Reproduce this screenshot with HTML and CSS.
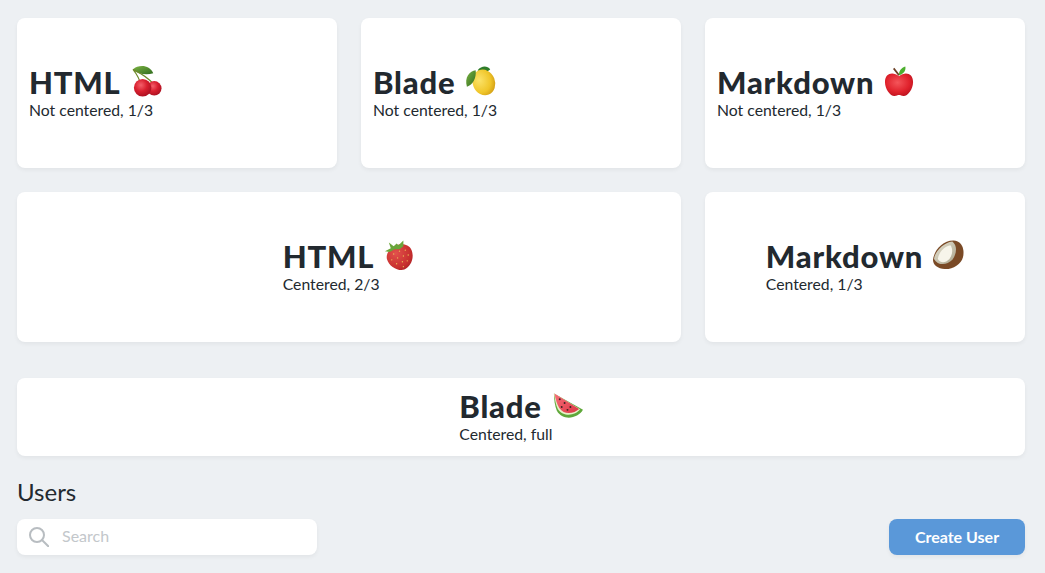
FILE: index.html
```html
<!DOCTYPE html>
<html lang="en">
<head>
<meta charset="utf-8">
<title>Cards</title>
<link rel="stylesheet" href="styles.css">
</head>
<body>
<svg class="defs" width="0" height="0" aria-hidden="true">
  <defs>
    <radialGradient id="gCherry" cx="40%" cy="35%" r="70%"><stop offset="0" stop-color="#f4606a"/><stop offset=".5" stop-color="#d9202f"/><stop offset="1" stop-color="#a80f20"/></radialGradient>
    <radialGradient id="gLemon" cx="35%" cy="35%" r="75%"><stop offset="0" stop-color="#fbe36a"/><stop offset=".65" stop-color="#f0c62a"/><stop offset="1" stop-color="#cf9a12"/></radialGradient>
    <radialGradient id="gApple" cx="45%" cy="40%" r="70%"><stop offset="0" stop-color="#f4555a"/><stop offset=".6" stop-color="#e0222c"/><stop offset="1" stop-color="#b3101d"/></radialGradient>
    <radialGradient id="gBerry" cx="35%" cy="35%" r="80%"><stop offset="0" stop-color="#e2504c"/><stop offset=".7" stop-color="#c8302f"/><stop offset="1" stop-color="#a51c24"/></radialGradient>
    <linearGradient id="gLeaf" x1="0" y1="0" x2="1" y2="1"><stop offset="0" stop-color="#7cb342"/><stop offset="1" stop-color="#2f6b1f"/></linearGradient>
    <linearGradient id="gFlesh" x1="0" y1="0" x2="1" y2="1"><stop offset="0" stop-color="#e8e4d4"/><stop offset="1" stop-color="#a9a48c"/></linearGradient>
    <linearGradient id="gMelon" x1="0" y1="0" x2="1" y2="1"><stop offset="0" stop-color="#f6707a"/><stop offset="1" stop-color="#dd3644"/></linearGradient>
  </defs>
</svg>
<main class="page">
  <section class="row">
    <article class="card">
      <div class="copy">
        <h2 class="title">HTML
          <svg class="emoji" viewBox="0 0 32 32" aria-hidden="true">
            <path d="M2 4C8 -1 19 -1 23 8 16 10 7 9 2 4Z" fill="url(#gLeaf)"/>
            <path d="M2 4C6 9 9 14 10 20M2 4C10 8 18 13 23 19" fill="none" stroke="#6f8a2c" stroke-width="1.2"/>
            <circle cx="24" cy="23.500" r="7.500" fill="url(#gCherry)"/>
            <circle cx="12" cy="23" r="9" fill="url(#gCherry)"/>
          </svg>
        </h2>
        <p class="sub">Not centered, 1/3</p>
      </div>
    </article>
    <article class="card">
      <div class="copy">
        <h2 class="title">Blade
          <svg class="emoji" viewBox="0 0 32 32" aria-hidden="true">
            <path d="M13 5C17 0 23 0 26 4 22 7 17 8 13 5Z" fill="#2f7d2a"/>
            <ellipse cx="19.500" cy="17.500" rx="11.500" ry="13.500" transform="rotate(-22 19.500 17.500)" fill="url(#gLemon)"/>
            <path d="M11 5C5 6 -1 12 2 22 8 20 12 13 11 5Z" fill="url(#gLeaf)"/>
          </svg>
        </h2>
        <p class="sub">Not centered, 1/3</p>
      </div>
    </article>
    <article class="card">
      <div class="copy">
        <h2 class="title">Markdown
          <svg class="emoji" viewBox="0 0 32 32" aria-hidden="true">
            <path d="M15.500 11C9 6 1 8 1 17 1 25 7 32 11 31.500 13 31.300 14 30.500 15.500 30.500 17 30.500 18 31.300 20 31.500 24 32 30 25 30 17 30 8 22 6 15.500 11Z" fill="url(#gApple)"/>
            <path d="M10 3L15.500 10" stroke="#6b3f24" stroke-width="1.800" fill="none"/>
            <path d="M15.500 10C15 6 18 2 22 1 23 5 20 9 15.500 10Z" fill="#4caf2f"/>
          </svg>
        </h2>
        <p class="sub">Not centered, 1/3</p>
      </div>
    </article>
  </section>
  <section class="row">
    <article class="card card-wide card-center">
      <div class="copy">
        <h2 class="title">HTML
          <svg class="emoji" viewBox="0 0 32 32" aria-hidden="true">
            <path d="M8 9C14 3 25 4 28 10 32 18 28 28 21 31 15 33 5 28 3 20 2 15 5 11 8 9Z" fill="url(#gBerry)"/>
            <g fill="#e9bc55">
              <circle cx="10" cy="15" r=".7"/><circle cx="16" cy="12" r=".7"/><circle cx="22" cy="11" r=".7"/><circle cx="8" cy="21" r=".7"/><circle cx="14" cy="19" r=".7"/><circle cx="20" cy="17" r=".7"/><circle cx="25" cy="16" r=".7"/><circle cx="13" cy="25" r=".7"/><circle cx="19" cy="23" r=".7"/><circle cx="24" cy="22" r=".7"/><circle cx="20" cy="28" r=".7"/>
            </g>
            <path d="M1 12L7 9 5 3 10 7 13 4 15 6 20 1 20 7 16 10 11 10 6 13Z" fill="#6aa53a"/>
          </svg>
        </h2>
        <p class="sub">Centered, 2/3</p>
      </div>
    </article>
    <article class="card card-center">
      <div class="copy">
        <h2 class="title">Markdown
          <svg class="emoji" viewBox="0 0 32 32" aria-hidden="true">
            <path d="M0 21C1 11 10 1 21 1 29 1 33 9 31 18 29 26 20 31 12 30.500 5 30 0 27 0 21Z" fill="#7a4a26"/>
            <path d="M1 20C2 12 11 3 20 2 25 6 25 14 20 21 14 27 5 27 1 20Z" fill="url(#gFlesh)"/>
            <path d="M5 20C6 13 12 7 18 6 21 10 20 16 17 20 13 24 8 25 5 20Z" fill="#f7f5ea"/>
          </svg>
        </h2>
        <p class="sub">Centered, 1/3</p>
      </div>
    </article>
  </section>
  <section class="row row-full">
    <article class="card card-full card-center">
      <div class="copy">
        <h2 class="title">Blade
          <svg class="emoji" viewBox="0 0 32 32" aria-hidden="true">
            <path d="M2 4L32 21C27 30 11 33 5 22 3 17 2 10 2 4Z" fill="#5fa83a"/>
            <path d="M2 4L29 20.500C24 27 12 29 6 20 4 16 3 10 2 4Z" fill="#e8f0c8"/>
            <path d="M2.500 4L28 20C23 24.500 13 27 7.500 19 5 15 3.500 9 2.500 4Z" fill="url(#gMelon)"/>
            <g fill="#3a2222">
              <circle cx="8" cy="10" r="1"/><circle cx="13" cy="14" r="1"/><circle cx="19" cy="18" r="1"/><circle cx="10" cy="18" r="1"/><circle cx="16" cy="21" r="1"/>
            </g>
          </svg>
        </h2>
        <p class="sub">Centered, full</p>
      </div>
    </article>
  </section>
  <h3 class="heading">Users</h3>
  <div class="toolbar">
    <label class="search">
      <svg class="search-icon" viewBox="0 0 20 20" aria-hidden="true">
        <circle cx="8" cy="8" r="7" fill="none" stroke="#b8bdc1" stroke-width="2"/>
        <path d="M13 13L19.500 19.500" stroke="#b8bdc1" stroke-width="2" stroke-linecap="round"/>
      </svg>
      <input class="search-input" type="text" placeholder="Search">
    </label>
    <button class="button" type="button">Create User</button>
  </div>
</main>
</body>
</html>
```

FILE: styles.css
```css
* {
  box-sizing: border-box;
}

html,
body {
  margin: 0;
  padding: 0;
}

body {
  background: #edf0f3;
  color: #22292f;
  font-family: Lato, "Noto Sans", sans-serif;
  overflow: hidden;
}

.defs {
  display: block;
  height: 0;
}

.page {
  display: flex;
  flex-direction: column;
  gap: 24px;
  padding: 18px 20px 18px 17px;
}

.row {
  display: grid;
  grid-template-columns: repeat(3, 320px);
  gap: 24px;
}

.row-full {
  margin-top: 12px;
}

.card {
  display: flex;
  align-items: center;
  height: 150px;
  padding: 12px;
  background: #fff;
  border-radius: 8px;
  box-shadow: 0 2px 4px rgba(0, 0, 0, 0.05);
}

.card-wide {
  grid-column: span 2;
}

.card-full {
  grid-column: 1 / -1;
  height: 78px;
}

.card-center {
  justify-content: center;
}

.title {
  display: flex;
  gap: 10px;
  margin: 0 0 4px;
  font-size: 31px;
  font-weight: 900;
  line-height: 32px;
  letter-spacing: 0.8px;
}

.emoji {
  flex: none;
  width: 31px;
  height: 32px;
  margin-top: -1px;
  overflow: visible;
}

.sub {
  margin: 0 0 2px;
  font-size: 15.750px;
  line-height: 16px;
}

.heading {
  margin: -2px 0 -11px;
  font-size: 24px;
  font-weight: 400;
  line-height: 28px;
}

.toolbar {
  display: flex;
  justify-content: space-between;
  align-items: center;
}

.search {
  display: flex;
  align-items: center;
  gap: 13px;
  width: 300px;
  height: 36px;
  padding-left: 12px;
  background: #fff;
  border-radius: 8px;
  box-shadow: 0 2px 4px rgba(0, 0, 0, 0.05);
}

.search-icon {
  flex: none;
  width: 20px;
  height: 20px;
}

.search-input {
  flex: 1;
  min-width: 0;
  margin-bottom: 3px;
  border: 0;
  outline: 0;
  padding: 0;
  background: transparent;
  color: #22292f;
  font: 400 16px Lato, sans-serif;
}

.search-input::placeholder {
  color: #c3c7cb;
  opacity: 1;
}

.button {
  width: 136px;
  height: 36px;
  padding: 0 0 2px;
  border: 0;
  border-radius: 8px;
  background: #5a98d9;
  color: #fff;
  font: 700 16px Lato, sans-serif;
  box-shadow: 0 2px 4px rgba(0, 0, 0, 0.05);
}
```
